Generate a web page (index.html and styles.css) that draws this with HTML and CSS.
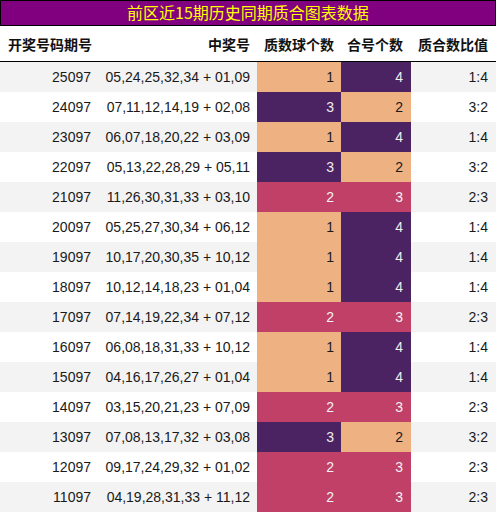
FILE: index.html
```html
<!DOCTYPE html>
<html lang="zh">
<head>
<meta charset="utf-8">
<title>前区近15期历史同期质合图表数据</title>
<link rel="stylesheet" href="styles.css">
</head>
<body>
<div class="wrap">
  <div class="title">前区近15期历史同期质合图表数据</div>
  <table class="grid">
    <colgroup>
      <col class="w1"><col class="w2"><col class="w3"><col class="w4"><col class="w5">
    </colgroup>
    <thead>
      <tr><th>开奖号码期号</th><th>中奖号</th><th>质数球个数</th><th>合号个数</th><th>质合数比值</th></tr>
    </thead>
    <tbody>
      <tr><td>25097</td><td>05,24,25,32,34 + 01,09</td><td class="lo">1</td><td class="hi">4</td><td>1:4</td></tr>
      <tr><td>24097</td><td>07,11,12,14,19 + 02,08</td><td class="hi">3</td><td class="lo">2</td><td>3:2</td></tr>
      <tr><td>23097</td><td>06,07,18,20,22 + 03,09</td><td class="lo">1</td><td class="hi">4</td><td>1:4</td></tr>
      <tr><td>22097</td><td>05,13,22,28,29 + 05,11</td><td class="hi">3</td><td class="lo">2</td><td>3:2</td></tr>
      <tr><td>21097</td><td>11,26,30,31,33 + 03,10</td><td class="mid">2</td><td class="mid">3</td><td>2:3</td></tr>
      <tr><td>20097</td><td>05,25,27,30,34 + 06,12</td><td class="lo">1</td><td class="hi">4</td><td>1:4</td></tr>
      <tr><td>19097</td><td>10,17,20,30,35 + 10,12</td><td class="lo">1</td><td class="hi">4</td><td>1:4</td></tr>
      <tr><td>18097</td><td>10,12,14,18,23 + 01,04</td><td class="lo">1</td><td class="hi">4</td><td>1:4</td></tr>
      <tr><td>17097</td><td>07,14,19,22,34 + 07,12</td><td class="mid">2</td><td class="mid">3</td><td>2:3</td></tr>
      <tr><td>16097</td><td>06,08,18,31,33 + 10,12</td><td class="lo">1</td><td class="hi">4</td><td>1:4</td></tr>
      <tr><td>15097</td><td>04,16,17,26,27 + 01,04</td><td class="lo">1</td><td class="hi">4</td><td>1:4</td></tr>
      <tr><td>14097</td><td>03,15,20,21,23 + 07,09</td><td class="mid">2</td><td class="mid">3</td><td>2:3</td></tr>
      <tr><td>13097</td><td>07,08,13,17,32 + 03,08</td><td class="hi">3</td><td class="lo">2</td><td>3:2</td></tr>
      <tr><td>12097</td><td>09,17,24,29,32 + 01,02</td><td class="mid">2</td><td class="mid">3</td><td>2:3</td></tr>
      <tr><td>11097</td><td>04,19,28,31,33 + 11,12</td><td class="mid">2</td><td class="mid">3</td><td>2:3</td></tr>
    </tbody>
  </table>
</div>
</body>
</html>
```

FILE: styles.css
```css
html, body {
  margin: 0;
  padding: 0;
  background: #ffffff;
}

.wrap {
  width: 496px;
}

.title {
  box-sizing: border-box;
  height: 26px;
  border: 1px solid #000000;
  background: #800080;
  color: #ffff00;
  font-family: "Noto Sans CJK SC", "Noto Sans", sans-serif;
  font-size: 16px;
  line-height: 23px;
  text-align: center;
}

.grid {
  width: 496px;
  border-collapse: collapse;
  border-spacing: 0;
  table-layout: fixed;
}

.w1 { width: 98px; }
.w2 { width: 159px; }
.w3 { width: 84px; }
.w4 { width: 70px; }
.w5 { width: 85px; }

.grid th {
  height: 35px;
  padding: 0 7px 0 0;
  border-bottom: 1px solid #000000;
  font-family: "Noto Sans CJK SC", "Noto Sans", sans-serif;
  font-weight: bold;
  font-size: 14px;
  color: #111111;
  text-align: right;
  white-space: nowrap;
}

.grid th:first-child {
  text-align: left;
  padding: 0 0 0 8px;
}

.grid th:nth-child(4),
.grid th:nth-child(5) {
  padding-right: 8px;
}

.grid td {
  height: 30px;
  padding: 0 7px 0 0;
  font-family: "Liberation Sans", Arial, sans-serif;
  font-size: 14px;
  color: #1a1a1a;
  text-align: right;
  white-space: nowrap;
}

.grid td:nth-child(4),
.grid td:nth-child(5) {
  padding-right: 8px;
}

.grid tbody tr:nth-child(odd) {
  background: #f3f3f3;
}

.grid tbody tr:nth-child(even) {
  background: #ffffff;
}

.grid td.lo {
  background: #eeb182;
  color: #1a1a1a;
}

.grid td.hi {
  background: #4b2262;
  color: #eeeeee;
}

.grid td.mid {
  background: #c14068;
  color: #f2f2f2;
}
```
